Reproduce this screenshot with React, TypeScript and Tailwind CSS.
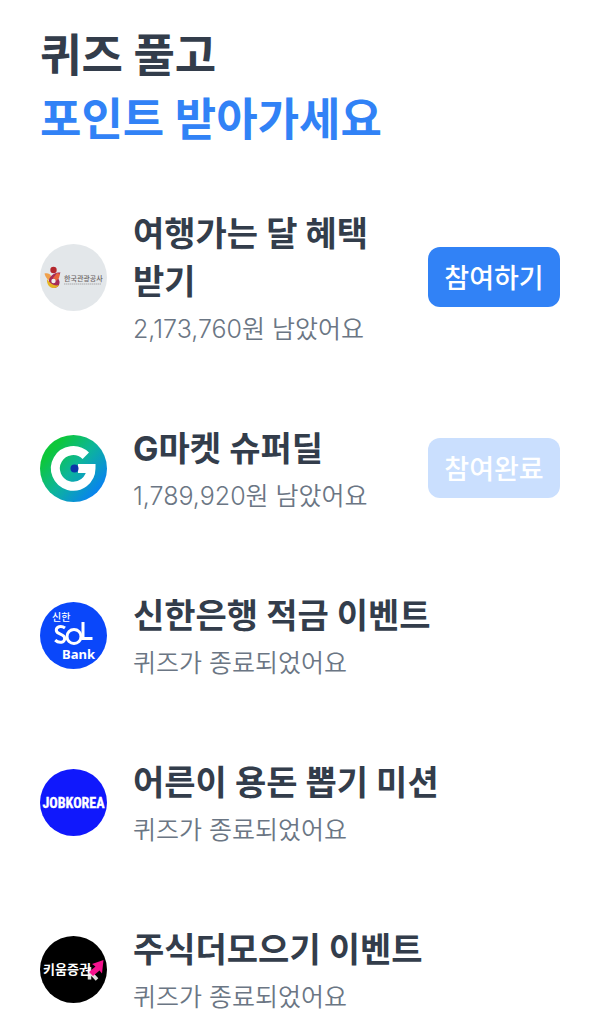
import React from 'react';
import clsx from 'clsx';

type QuizStatus = 'open' | 'done' | 'closed';

interface Quiz {
  id: string;
  title: string;
  description: string;
  status: QuizStatus;
  logo: React.ReactNode;
}

function KtoLogo() {
  return (
    <svg viewBox="0 0 67 67" className="w-full h-full" aria-hidden="true">
      <circle cx="33.5" cy="33.5" r="33.5" fill="#E3E7EA" />
      <circle cx="13.5" cy="26" r="3.2" fill="#B4272D" />
      <path d="M4.5 29.5c3-.8 5.5 0 6.5 2.5l1 5c-3.5 0-6.5-3-7.5-7.5z" fill="#F0A04B" />
      <path d="M20.5 28.5h-2.5c-3 .5-6 2-8 5-2.5 4-1 9.5 3.5 10.3 4 .5 6.500-2.800 6-6.300l-1.500-4z" fill="#A62B58" />
      <path d="M7 35c-.5 4.500 2 9 6.500 9 2.500 0 4.500-1.300 5.500-3-4 1.500-8.500-.5-12-6z" fill="#E5B422" />
      <path d="M13 34l4-5 3 1-1 4-3 3z" fill="#E8643C" />
      <circle cx="13.5" cy="37" r="2.2" fill="#EEF0EF" />
      <text x="24" y="36.5" fontSize="7" fontWeight="500" fill="#6B6565" fontFamily="'Noto Sans CJK KR', sans-serif">
        한국관광공사
      </text>
      <path d="M24 40h37" stroke="#A9A9AB" strokeWidth="1" strokeDasharray="1.5 .5" />
    </svg>
  );
}

function GmarketLogo() {
  return (
    <svg viewBox="0 0 67 67" className="w-full h-full" aria-hidden="true">
      <defs>
        <linearGradient id="gmarket" x1="0.1" y1="0.15" x2="0.9" y2="0.85">
          <stop offset="0.1" stopColor="#0DC73A" />
          <stop offset="0.5" stopColor="#0DB59A" />
          <stop offset="1" stopColor="#087FF5" />
        </linearGradient>
      </defs>
      <circle cx="33.5" cy="33.5" r="33.5" fill="url(#gmarket)" />
      <path d="M45.8 20.800A17.800 17.800 0 1 0 51 33.500H38" fill="none" stroke="#fff" strokeWidth="9" />
      <circle cx="34.5" cy="33.5" r="4" fill="#0B35A8" />
    </svg>
  );
}

function SolBankLogo() {
  return (
    <svg viewBox="0 0 67 67" className="w-full h-full" aria-hidden="true">
      <circle cx="33.5" cy="33.5" r="33.5" fill="#0A47FA" />
      <text x="12" y="18.5" fontSize="10" fontWeight="500" fill="#fff" fontFamily="'Noto Sans CJK KR', sans-serif">
        신한
      </text>
      <g fill="none" stroke="#fff" strokeWidth="3">
        <path d="M25 26c-2-1.5-4-1.8-6-1.3-3.500 1-3.500 5-.5 6.500l4 2c3.500 2 2.500 6.500-1 7-2.500.4-4.500-.3-6.300-2" />
        <circle cx="34" cy="34.5" r="7" />
        <path d="M43 20v16.5h9.5" />
      </g>
      <text x="22" y="57" fontSize="13" fontWeight="700" fill="#fff" fontFamily="'Noto Sans', sans-serif">
        Bank
      </text>
    </svg>
  );
}

function JobKoreaLogo() {
  return (
    <svg viewBox="0 0 67 67" className="w-full h-full" aria-hidden="true">
      <circle cx="33.5" cy="33.5" r="33.5" fill="#1018FC" />
      <text
        x="33.5"
        y="38.5"
        textAnchor="middle"
        fontSize="14"
        fontWeight="700"
        fill="#fff"
        stroke="#fff"
        strokeWidth="0.3"
        fontFamily="'Liberation Sans Narrow', 'Roboto Condensed', sans-serif"
      >
        JOBKOREA
      </text>
    </svg>
  );
}

function KiwoomLogo() {
  return (
    <svg viewBox="0 0 67 67" className="w-full h-full" aria-hidden="true">
      <circle cx="33.5" cy="33.5" r="33.5" fill="#000" />
      <path d="M49.5 31v12.5M51 37l6 6.5" stroke="#DDD" strokeWidth="3.500" fill="none" />
      <text x="3" y="38" fontSize="13" fontWeight="700" fill="#fff" fontFamily="'Noto Sans CJK KR', sans-serif">
        키움증권
      </text>
      <path d="M63.500 24L52 28l3.500 2.500-6.500 5.500 4 4 6.500-5.500 2.500 3z" fill="#F5128E" />
    </svg>
  );
}

const quizzes: Quiz[] = [
  { id: 'kto', title: '여행가는 달 혜택 받기', description: '2,173,760원 남았어요', status: 'open', logo: <KtoLogo /> },
  { id: 'gmarket', title: 'G마켓 슈퍼딜', description: '1,789,920원 남았어요', status: 'done', logo: <GmarketLogo /> },
  { id: 'sol', title: '신한은행 적금 이벤트', description: '퀴즈가 종료되었어요', status: 'closed', logo: <SolBankLogo /> },
  { id: 'jobkorea', title: '어른이 용돈 뽑기 미션', description: '퀴즈가 종료되었어요', status: 'closed', logo: <JobKoreaLogo /> },
  { id: 'kiwoom', title: '주식더모으기 이벤트', description: '퀴즈가 종료되었어요', status: 'closed', logo: <KiwoomLogo /> },
];

function QuizRow({ quiz }: { quiz: Quiz }) {
  const done = quiz.status === 'done';

  return (
    <li className="flex items-center">
      <div className="w-[67px] h-[67px] mr-[26px] shrink-0">{quiz.logo}</div>

      <div className="flex-1 min-w-0 pt-1">
        <h2 className="text-[34px] leading-[48px] font-bold text-[#333D4B] break-keep">{quiz.title}</h2>
        <p className="mt-1 text-[25px] leading-[38px] font-[350] text-[#6B7684]">{quiz.description}</p>
      </div>

      {quiz.status !== 'closed' && (
        <button
          type="button"
          disabled={done}
          className={clsx(
            'h-[60px] w-[132px] pt-1 shrink-0 rounded-xl text-[27px] leading-[40px] font-medium text-white',
            done ? 'bg-[#CADFFE]' : 'bg-[#3182F6]'
          )}
        >
          {done ? '참여완료' : '참여하기'}
        </button>
      )}
    </li>
  );
}

export default function App() {
  return (
    <main
      lang="ko"
      className="min-h-screen bg-white px-10 pt-6 pb-3 font-[Inter,'Noto_Sans_CJK_KR',sans-serif]"
    >
      <h1 className="text-[45px] leading-[64px] font-bold text-[#333D4B]">
        퀴즈 풀고
        <span className="block text-[#3182F6]">포인트 받아가세요</span>
      </h1>

      <ul className="mt-[54px] flex flex-col gap-[73px]">
        {quizzes.map((quiz) => (
          <QuizRow key={quiz.id} quiz={quiz} />
        ))}
      </ul>
    </main>
  );
}
